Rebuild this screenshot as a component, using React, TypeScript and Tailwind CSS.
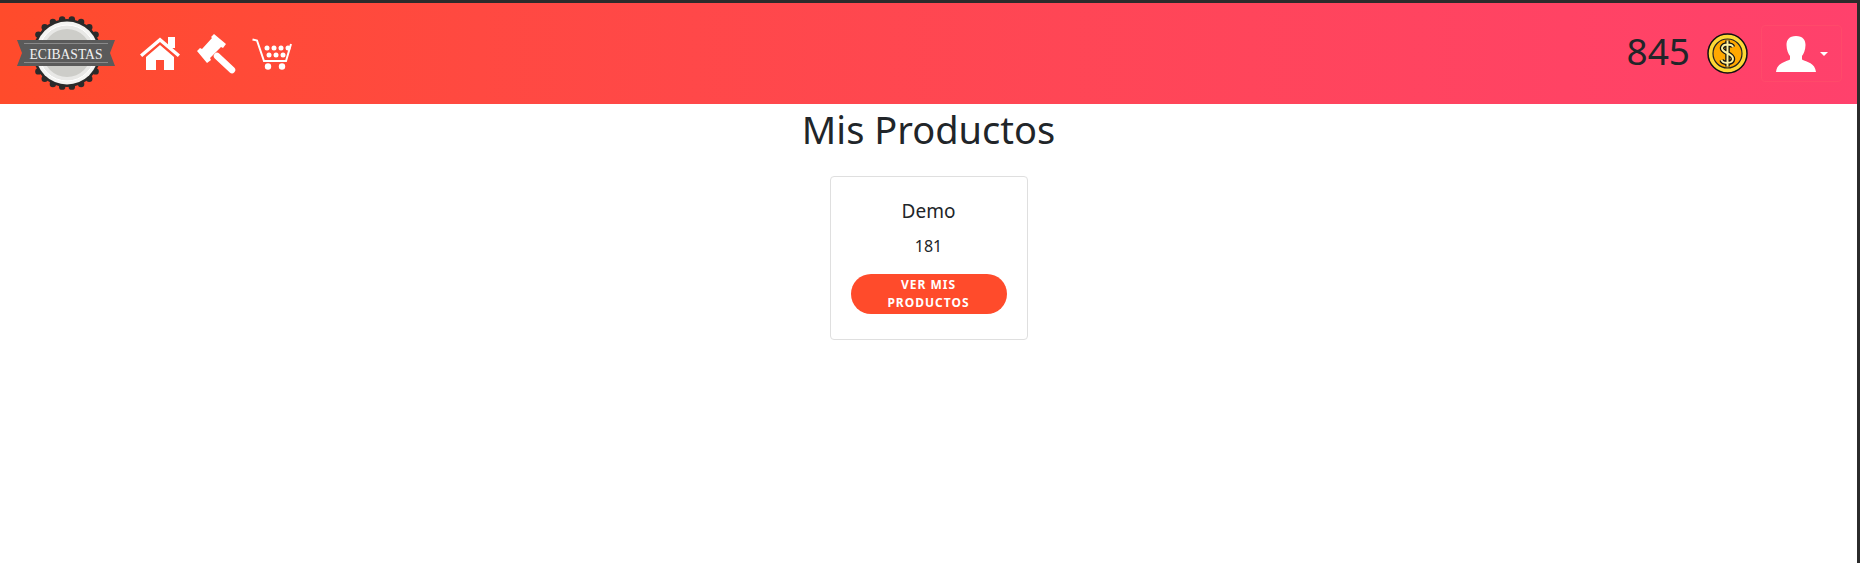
const scallops = Array.from({ length: 22 }, (_, i) => (i * 360) / 22);

function Logo() {
    return (
        <svg width="100" height="76" viewBox="0 0 100 76">
            {scallops.map((a) => (
                <circle key={a} cx={50 + 34 * Math.cos((a * Math.PI) / 180)} cy={38 + 34 * Math.sin((a * Math.PI) / 180)} r="3.2" fill="#2a2a2a" />
            ))}
            <circle cx="50" cy="38" r="34" fill="#2a2a2a" />
            <circle cx="50" cy="38" r="31.5" fill="#f4f4f2" />
            <circle cx="50" cy="38" r="28" fill="#e8e8e6" stroke="#fff" strokeWidth="1" />
            <circle cx="50" cy="38" r="24" fill="#cdcdc9" />
            <polygon points="0,25 98,25 93,38 98,51 0,51 5,38" fill="#5a5a5a" />
            <line x1="7" y1="28.5" x2="91" y2="28.5" stroke="#8a8a8a" strokeWidth="1" />
            <line x1="7" y1="47.5" x2="91" y2="47.5" stroke="#8a8a8a" strokeWidth="1" />
            <text x="49" y="43.5" textAnchor="middle" fontFamily="'Liberation Serif', serif" fontSize="15" fill="#f2f2f2" textLength="73" lengthAdjust="spacingAndGlyphs">ECIBASTAS</text>
        </svg>
    );
}

function HomeIcon() {
    return (
        <svg width="40" height="33" viewBox="0 0 40 33" fill="white">
            <rect x="28" y="0" width="7" height="11" />
            <path d="M0 17.5 L20 0.5 L40 17.5 L37.8 20 L20 5 L2.2 20 Z" />
            <path d="M6 20 L20 8 L34 20 V33 H24 V23 H16 V33 H6 Z" />
        </svg>
    );
}

function GavelIcon() {
    return (
        <svg width="40" height="40" viewBox="0 0 40 40" fill="white">
            <path d="M18 0 L30 10 L27 14 L25 13 L14 24 L15 26 L11 29 L1 17 L4 14 L6 15 L16 4 L15 3 Z" />
            <path d="M21 22 L36 36" fill="none" stroke="white" strokeWidth="6.5" strokeLinecap="round" />
        </svg>
    );
}

function CartIcon() {
    const dots = [
        [15, 10], [22, 10], [29, 10], [36, 10],
        [17, 17], [24, 17], [31, 17],
    ];
    return (
        <svg width="40" height="32" viewBox="0 0 40 32" fill="white">
            <path d="M0.5 1.5 L5 2.5 L12 23 H34 L39 6" fill="none" stroke="white" strokeWidth="2" />
            {dots.map(([x, y]) => (
                <circle key={`${x}-${y}`} cx={x} cy={y} r="2.5" />
            ))}
            <circle cx="16" cy="28.5" r="3.2" />
            <circle cx="30" cy="28.5" r="3.2" />
        </svg>
    );
}

function CoinIcon() {
    return (
        <svg width="41" height="41" viewBox="0 0 41 41">
            <circle cx="20.5" cy="20.5" r="19.5" fill="#fdd835" stroke="#111" strokeWidth="1.5" />
            <circle cx="20.5" cy="20.5" r="14.5" fill="#ffa800" stroke="#222" strokeWidth="1.2" />
            <path d="M26 14 C25 11 16 10 15 15 C14.5 20 26 20 26 26 C25.5 31 16 31 14.5 27 M20.5 7.5 V33.5" fill="none" stroke="#111" strokeWidth="4.5" />
            <path d="M26 14 C25 11 16 10 15 15 C14.5 20 26 20 26 26 C25.5 31 16 31 14.5 27 M20.5 7.5 V33.5" fill="none" stroke="#fdf0a0" strokeWidth="2" />
        </svg>
    );
}

function UserIcon() {
    return (
        <svg width="40" height="36" viewBox="0 0 40 36" fill="white">
            <path d="M20 0 C27 0 29.5 4 29.5 9 C29.5 14 27.5 18 26 20 V23.5 C31 26 39 27 40 36 H0 C1 27 9 26 14 23.5 V20 C12.5 18 10.5 14 10.5 9 C10.5 4 13 0 20 0 Z" />
        </svg>
    );
}

export default function App() {
    return (
        <div className="h-[563px] overflow-hidden bg-white border-t-[3px] border-r-[3px] border-[#2b2b2b] text-[#212529] font-['Noto_Sans',sans-serif]">
            <nav className="h-[101px] flex items-center justify-between bg-gradient-to-r from-[#ff4b2b] to-[#ff416c]">
                <div className="flex items-center">
                    <div className="ml-[17px] mt-[-2px] flex">
                        <Logo />
                    </div>
                    <div className="ml-[23px] flex items-center">
                        <HomeIcon />
                    </div>
                    <div className="ml-[16px] flex items-center">
                        <GavelIcon />
                    </div>
                    <div className="ml-[16px] flex items-center">
                        <CartIcon />
                    </div>
                </div>
                <div className="flex items-center">
                    <span className="text-[37px] leading-none mt-[-7px]">845</span>
                    <div className="ml-[17px] flex">
                        <CoinIcon />
                    </div>
                    <button className="ml-[13px] mr-[15px] w-[81px] h-[57px] rounded border border-[#ff4a6a] flex items-center justify-center gap-[4px] pl-[1px]">
                        <UserIcon />
                        <span className="w-0 h-0 border-x-[4px] border-x-transparent border-t-[4px] border-t-white" />
                    </button>
                </div>
            </nav>
            <main className="flex flex-col items-center">
                <h1 className="text-[38px] leading-[48px] mt-[1px] font-normal">Mis Productos</h1>
                <div className="mt-[23px] w-[198px] h-[164px] rounded border border-[#dfdfdf] flex flex-col items-center pt-[22px]">
                    <h5 className="text-[19px] leading-[24px]">Demo</h5>
                    <p className="mt-[11px] text-[16px] leading-[24px]">181</p>
                    <button className="mt-[16px] w-[156px] h-[40px] px-[30px] rounded-full bg-[#ff4b2b] text-white text-[12px] leading-[18px] font-bold uppercase tracking-[1px]">
                        Ver mis productos
                    </button>
                </div>
            </main>
        </div>
    );
}
